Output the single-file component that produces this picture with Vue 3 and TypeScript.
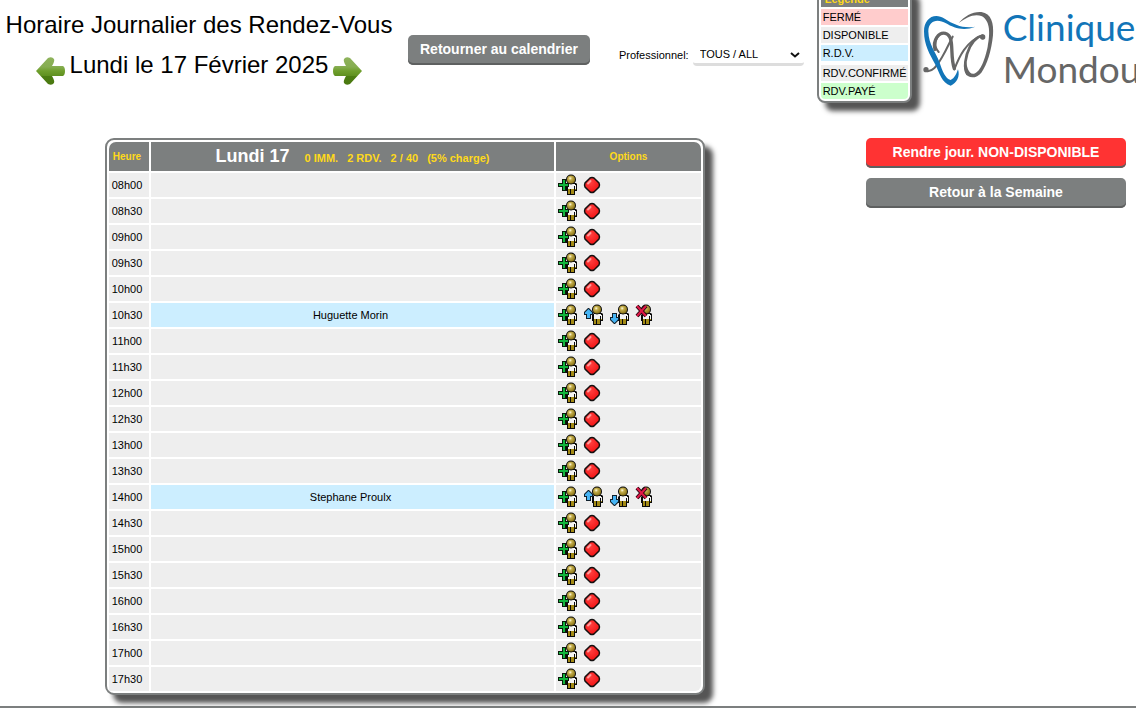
<script setup lang="ts">
import { ref } from 'vue'

interface Slot {
  time: string
  patient?: string
}

const bookings: Record<string, string> = {
  '10h30': 'Huguette Morin',
  '14h00': 'Stephane Proulx',
}

const slots: Slot[] = Array.from({ length: 20 }, (_, i) => {
  const hour = String(8 + Math.floor(i / 2)).padStart(2, '0')
  const time = `${hour}h${i % 2 ? '30' : '00'}`
  return { time, patient: bookings[time] }
})

const stats: string[] = ['0 IMM.', '2 RDV.', '2 / 40', '(5% charge)']

const legend = [
  { label: 'FERMÉ', kind: 'closed' },
  { label: 'DISPONIBLE', kind: 'free' },
  { label: 'R.D.V.', kind: 'booked' },
  { label: 'RDV.CONFIRMÉ', kind: 'confirmed' },
  { label: 'RDV.PAYÉ', kind: 'paid' },
]

const professional = ref('all')
</script>

<template>
  <div class="page">
    <svg class="defs" aria-hidden="true">
      <defs>
        <linearGradient id="leaf" x1="0" y1="0" x2="0" y2="1">
          <stop offset="0" stop-color="#8fb35c" />
          <stop offset="0.35" stop-color="#86ad51" />
          <stop offset="0.5" stop-color="#6f9f2c" />
          <stop offset="0.68" stop-color="#5f9020" />
          <stop offset="0.7" stop-color="#4c7d12" />
          <stop offset="1" stop-color="#4a7810" />
        </linearGradient>
        <radialGradient id="skin" cx="0.4" cy="0.35" r="0.65">
          <stop offset="0" stop-color="#fffbe0" />
          <stop offset="0.35" stop-color="#c4ae4c" />
          <stop offset="1" stop-color="#8a7418" />
        </radialGradient>
        <radialGradient id="ruby" cx="0.4" cy="0.35" r="0.7">
          <stop offset="0" stop-color="#ff4040" />
          <stop offset="1" stop-color="#f01010" />
        </radialGradient>
        <symbol id="person" viewBox="0 0 22 22">
          <path d="M11 9h8l1 1v7h-2v4h-8v-4h-1v-6z" fill="#0a0a0a" />
          <path d="M11 10h7v1h1v5h-1v-4h-1v3h-6z" fill="#f4f4f4" />
          <path d="M18 15h1v1h-1z" fill="#a38a14" />
          <path d="M11 15h2v5h-2zM14 15h3v5h-3z" fill="#a38a14" />
          <circle cx="14" cy="5.500" r="5" fill="#0a0a0a" />
          <circle cx="14" cy="5.500" r="4" fill="url(#skin)" />
        </symbol>
      </defs>
    </svg>

    <header class="top">
      <div class="heading">
        <h1>Horaire Journalier des Rendez-Vous</h1>
        <div class="day">
          <a href="#prev" aria-label="Jour précédent">
            <svg width="32" height="30" viewBox="0 0 32 30">
              <path d="M1 15 13 2Q17 0 19 3 20 5 17 10L28 10Q30 11 30 15 30 19 28 20L17 20Q20 25 19 27 17 30 13 28Z" fill="url(#leaf)" />
            </svg>
          </a>
          <span>Lundi le 17 Février 2025</span>
          <a href="#next" aria-label="Jour suivant">
            <svg width="32" height="30" viewBox="0 0 32 30">
              <path d="M31 15 19 2Q15 0 13 3 12 5 15 10L4 10Q2 11 2 15 2 19 4 20L15 20Q12 25 13 27 15 30 19 28Z" fill="url(#leaf)" />
            </svg>
          </a>
        </div>
      </div>
      <button type="button" class="btn back">Retourner au calendrier</button>
      <form class="filter" @submit.prevent>
        <label for="pro">Professionnel:</label>
        <div class="select">
          <select id="pro" v-model="professional">
            <option value="all">TOUS / ALL</option>
          </select>
          <svg width="10" height="6" viewBox="0 0 10 6" aria-hidden="true">
            <path d="M1 1 5 4.500 9 1" fill="none" stroke="#111" stroke-width="2" />
          </svg>
        </div>
      </form>
      <section class="legend" aria-label="Légende">
        <h2>Légende</h2>
        <ul>
          <li v-for="item in legend" :key="item.kind" :class="item.kind">{{ item.label }}</li>
        </ul>
      </section>
      <div class="brand">
        <svg width="76" height="82" viewBox="0 0 228 246" aria-hidden="true">
          <g fill="none" stroke="#666" stroke-linecap="round">
            <path d="M16 188C36 196 52 172 66 148 82 120 88 104 98 86" stroke-width="6" />
            <path d="M45 124C38 96 56 72 76 76 106 84 88 140 103 182" stroke-width="10" />
            <path d="M56 132C40 116 44 86 66 76" stroke-width="6" />
            <path d="M103 184C116 150 138 98 188 82" stroke-width="6" />
            <path d="M190 90C188 74 162 92 150 116 136 144 130 180 142 198" stroke-width="8" />
          </g>
          <circle cx="18" cy="185" r="8" fill="#666" />
          <circle cx="188" cy="87" r="8" fill="#666" />
          <path d="M116 45C134 24 158 10 184 12 214 16 222 46 219 82 214 128 202 170 184 194 168 214 142 212 135 192 131 176 134 164 137 150 140 178 146 200 162 197 182 192 196 150 203 116 210 80 212 40 186 25 164 15 140 28 116 45Z" fill="#666" />
          <path d="M166 56C132 70 100 60 78 46 52 30 25 38 25 70 26 110 46 130 59 164 67 188 76 212 92 216 104 210 108 200 114 184 121 206 110 226 92 233 64 224 60 196 45 168 29 138 12 112 12 70 12 32 42 12 74 32 102 50 130 62 166 56Z" fill="#1275b8" />
        </svg>
        <div class="name"><span>Clinique</span><span>Mondou</span></div>
      </div>
    </header>

    <main class="body">
      <div class="center">
        <table class="agenda">
          <colgroup><col class="c-time" /><col /><col class="c-opts" /></colgroup>
          <thead>
            <tr>
              <th scope="col" class="hour">Heure</th>
              <th scope="col">
                <div class="summary">
                  <strong>Lundi 17</strong>
                  <span v-for="s in stats" :key="s">{{ s }}</span>
                </div>
              </th>
              <th scope="col">Options</th>
            </tr>
          </thead>
          <tbody>
            <tr v-for="slot in slots" :key="slot.time">
              <td class="hour">{{ slot.time }}</td>
              <td class="entry" :class="{ booked: slot.patient }">{{ slot.patient }}</td>
              <td>
                <div class="actions">
                  <button type="button" aria-label="Ajouter">
                    <svg width="22" height="22" viewBox="0 0 22 22">
                      <use href="#person" />
                      <path d="M5 5h4v4h3v4h-3v4h-4v-4h-4v-4h4z" fill="#0a1a0a" />
                      <path d="M6 6h2v4h3v2h-3v4h-2v-4h-4v-2h4z" fill="#12b53c" />
                    </svg>
                  </button>
                  <template v-if="slot.patient">
                    <button type="button" aria-label="Devancer">
                      <svg width="22" height="22" viewBox="0 0 22 22">
                        <use href="#person" />
                        <path d="M5 4h1l4 4v3h-2v4h-5v-4h-2v-3z" fill="#10202c" />
                        <path d="M5.500 5 9 8.500v1.500h-2v4h-3v-4h-2v-1.500z" fill="#47b5f5" />
                      </svg>
                    </button>
                    <button type="button" aria-label="Retarder">
                      <svg width="22" height="22" viewBox="0 0 22 22">
                        <use href="#person" />
                        <path d="M3 9h5v4h2v3l-4 4h-1l-4-4v-3h2z" fill="#10202c" />
                        <path d="M4 10h3v4h2v1.500l-3.500 3.500-3.500-3.500v-1.500h2z" fill="#47b5f5" />
                      </svg>
                    </button>
                    <button type="button" aria-label="Supprimer">
                      <svg width="22" height="22" viewBox="0 0 22 22">
                        <g transform="translate(-3 0)"><use href="#person" /></g>
                        <path d="M2 2 11 12M11 2 2 12" stroke="#2a0710" stroke-width="4" />
                        <path d="M2 2 11 12M11 2 2 12" stroke="#e01848" stroke-width="2" />
                      </svg>
                    </button>
                  </template>
                  <button v-else type="button" aria-label="Fermer">
                    <svg width="22" height="22" viewBox="0 0 22 22">
                      <path d="M7 4Q9 3 11 4L16 9Q17 11 16 13L11 18Q9 19 7 18L2 13Q1 11 2 9Z" fill="url(#ruby)" stroke="#141010" stroke-width="1.500" />
                      <path d="M5 9.500 7.500 7" stroke="#ff9c9c" stroke-width="2" stroke-linecap="round" />
                    </svg>
                  </button>
                </div>
              </td>
            </tr>
          </tbody>
        </table>
      </div>
      <aside class="side">
        <button type="button" class="btn danger">Rendre jour. NON-DISPONIBLE</button>
        <button type="button" class="btn">Retour à la Semaine</button>
      </aside>
    </main>
    <hr />
  </div>
</template>

<style>
body {
  background: #fff;
}
</style>

<style scoped>
.page {
  font-family: 'Liberation Sans', Arial, sans-serif;
  font-size: 11px;
  color: #000;
  overflow: hidden;
}
.page * {
  box-sizing: border-box;
}
.defs {
  position: absolute;
  width: 0;
  height: 0;
}
.top {
  display: flex;
  align-items: flex-start;
  padding-bottom: 35px;
}
.top > * {
  flex-shrink: 0;
}
.heading {
  width: 398px;
  padding-top: 5px;
  text-align: center;
  font-size: 24px;
  line-height: 40px;
  white-space: nowrap;
}
.heading h1 {
  margin: 0;
  font: inherit;
}
.day {
  display: flex;
  justify-content: center;
  align-items: flex-start;
  gap: 3px;
}
.day svg {
  display: block;
  margin-top: 11px;
}
.btn {
  height: 30px;
  padding: 0 12px 2px;
  border: 0;
  border-radius: 5px;
  background: #7c7f7f;
  box-shadow: inset 0 -2px #5e6060;
  color: #fff;
  font: bold 14px 'Liberation Sans', Arial, sans-serif;
  white-space: nowrap;
}
.btn.danger {
  background: #f33;
}
.back {
  margin: 35px 29px 0 10px;
}
.filter {
  display: flex;
  align-items: center;
  gap: 4px;
  margin: 44px 13px 0 0;
}
.select {
  position: relative;
  width: 111px;
}
.select select {
  display: block;
  width: 100%;
  height: 22px;
  padding: 0 7px;
  appearance: none;
  border: 0;
  border-bottom: 3px solid #ddd;
  border-radius: 4px;
  background: #fff;
  color: #000;
  font: inherit;
}
.select svg {
  position: absolute;
  right: 4px;
  top: 8px;
  pointer-events: none;
}
.legend {
  width: 95px;
  margin-top: -13px;
  padding: 2px;
  border: 2px solid #7c7f7f;
  border-radius: 8px;
  background: #fff;
  box-shadow: 8px 8px 5px #555;
  line-height: 16px;
}
.legend h2 {
  margin: 0 0 2px;
  padding-left: 4px;
  background: #7c7f7f;
  color: #ffd91a;
  font-size: 11px;
}
.legend ul {
  display: grid;
  gap: 2px;
  margin: 0;
  padding: 0;
  list-style: none;
}
.legend li {
  padding-left: 2px;
  background: #eee;
  white-space: nowrap;
}
.legend .closed {
  background: #fcc;
}
.legend .booked {
  background: #cef;
}
.legend .confirmed {
  margin-top: 2px;
}
.legend .paid {
  background: #cfc;
  border-radius: 0 0 4px 4px;
}
.brand {
  display: flex;
  align-items: flex-end;
  gap: 7px;
  margin: 6px 0 0 8px;
}
.name {
  display: flex;
  flex-direction: column;
  color: #666;
  font: 37px/42px Lato, sans-serif;
}
.name span:first-child {
  color: #1275b8;
}
.body {
  display: flex;
  align-items: flex-start;
}
.center {
  flex: 1;
  display: flex;
  justify-content: center;
}
.agenda {
  width: 600px;
  table-layout: fixed;
  border: 2px solid #7c7f7f;
  border-radius: 9px;
  border-collapse: separate;
  border-spacing: 2px;
  background: #fff;
  box-shadow: 8px 8px 5px #555;
  text-align: center;
}
.c-time {
  width: 40px;
}
.c-opts {
  width: 145px;
}
.agenda th {
  height: 29px;
  padding: 0;
  background: #7c7f7f;
  color: #ffd91a;
  font-size: 10px;
}
.agenda th:first-child {
  border-top-left-radius: 7px;
}
.agenda th:last-child {
  border-top-right-radius: 7px;
}
.agenda td {
  height: 24px;
  padding: 0;
  background: #eee;
}
.agenda .hour,
.agenda .entry {
  padding-right: 4px;
}
.agenda tr:last-child td:last-child {
  border-bottom-right-radius: 6px;
}
.agenda td.booked {
  background: #cef;
}
.summary {
  display: flex;
  justify-content: center;
  align-items: baseline;
  gap: 9px;
  font-size: 11px;
}
.summary strong {
  margin-right: 6px;
  color: #fff;
  font-size: 18px;
}
.actions {
  display: flex;
  gap: 4px;
  padding-left: 1px;
}
.actions button {
  padding: 0;
  border: 0;
  background: none;
}
.actions svg {
  display: block;
}
.side {
  display: grid;
  gap: 10px;
  width: 260px;
  margin: 0 10px 0 56px;
}
hr {
  height: 2px;
  margin: 11px 0 0;
  border: 0;
  background: #7c7f7f;
}
</style>
